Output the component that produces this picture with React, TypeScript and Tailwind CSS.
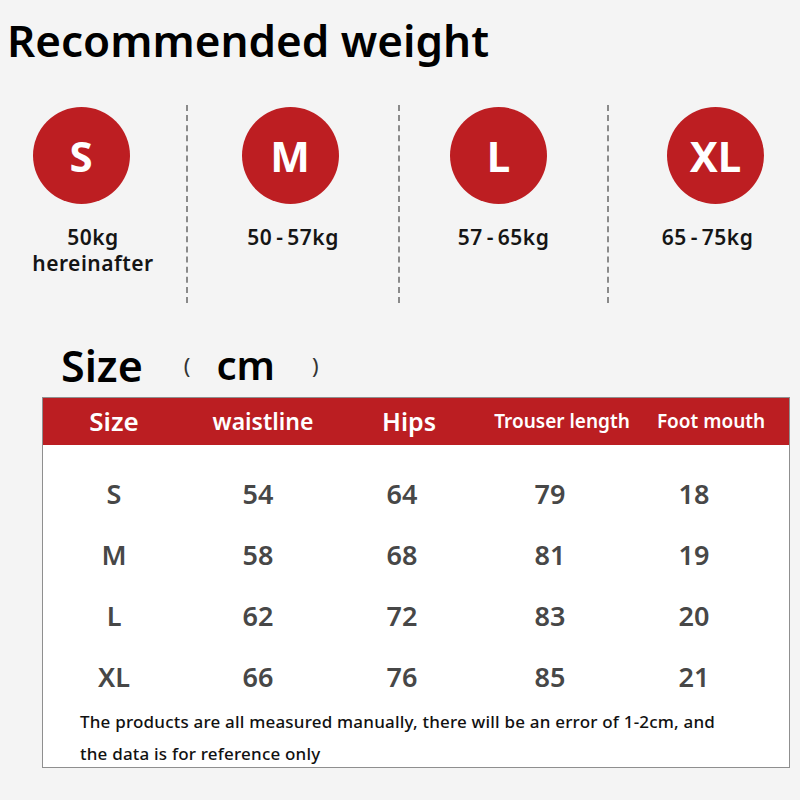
const weights = [
  { size: "S", lines: ["50kg", "hereinafter"], w: "w-[186px]", shift: "mr-[24px]" },
  { size: "M", lines: ["50\u2009-\u200957kg"], w: "w-[210px]", shift: "mr-[6px]" },
  { size: "L", lines: ["57\u2009-\u200965kg"], w: "w-[207px]", shift: "mr-[10px]" },
  { size: "XL", lines: ["65\u2009-\u200975kg"], w: "w-[197px]", shift: "ml-[16px]" },
];

const rows = [
  ["S", "54", "64", "79", "18"],
  ["M", "58", "68", "81", "19"],
  ["L", "62", "72", "83", "20"],
  ["XL", "66", "76", "85", "21"],
];

const Divider = () => (
  <div className="w-0 h-[198px] border-l-2 border-dashed border-[#8a8a8a]" />
);

export default function App() {
  return (
    <div
      className="w-[800px] h-[800px] bg-[#f4f4f4] text-black overflow-hidden"
      style={{ fontFamily: '"Noto Sans", "Noto Sans CJK SC", sans-serif' }}
    >
      <h1 className="pl-[7px] pt-[12px] text-[44px] leading-[56px] font-semibold">
        Recommended weight
      </h1>

      <div className="flex mt-[37px] h-[198px]">
        {weights.map((w, i) => (
          <div key={w.size} className="flex">
            {i > 0 && <Divider />}
            <div className={`${w.w} flex flex-col items-center`}>
              <div
                className={`${w.shift} mt-[2px] w-[97px] h-[97px] rounded-full bg-[#bd1e22] flex items-center justify-center text-white text-[42px] font-bold leading-none`}
              >
                {w.size}
              </div>
              <div className="mt-[20px] text-[21px] leading-[26px] font-semibold text-center text-[#151515] tracking-[0.5px]">
                {w.lines.map((l) => (
                  <div key={l}>{l}</div>
                ))}
              </div>
            </div>
          </div>
        ))}
      </div>

      <div className="flex items-center h-[94px] pt-[30px] pl-[61px]">
        <span className="text-[43px] font-semibold leading-none">Size</span>
        <span className="ml-[41px] text-[22px] text-[#333] leading-none">(</span>
        <span className="ml-[26px] text-[40px] font-semibold leading-none">cm</span>
        <span className="ml-[37px] text-[22px] text-[#333] leading-none">)</span>
      </div>

      <div className="ml-[42px] w-[748px] h-[371px] border border-[#8f8f8f] bg-white">
        <div className="grid grid-cols-[142px_156px_136px_170px_128px] items-center h-[47px] bg-[#bb1e22] text-white font-semibold">
          <div className="text-center text-[26px]">Size</div>
          <div className="text-center text-[23px]">waistline</div>
          <div className="text-center text-[25px]">Hips</div>
          <div className="text-center text-[19px]">Trouser length</div>
          <div className="text-center text-[19px]">Foot mouth</div>
        </div>
        <div className="pt-[19px]">
          {rows.map((r) => (
            <div
              key={r[0]}
              className="grid grid-cols-[142px_146px_142px_154px_134px] items-center h-[61px] text-[27px] font-semibold text-[#474747]"
            >
              {r.map((c, j) => (
                <div key={j} className="text-center">
                  {c}
                </div>
              ))}
            </div>
          ))}
        </div>
        <div className="pl-[37px] -mt-[2px] text-[17px] leading-[32px] text-[#111] font-medium tracking-[0.2px]">
          <div>The products are all measured manually, there will be an error of 1-2cm, and</div>
          <div>the data is for reference only</div>
        </div>
      </div>
    </div>
  );
}
